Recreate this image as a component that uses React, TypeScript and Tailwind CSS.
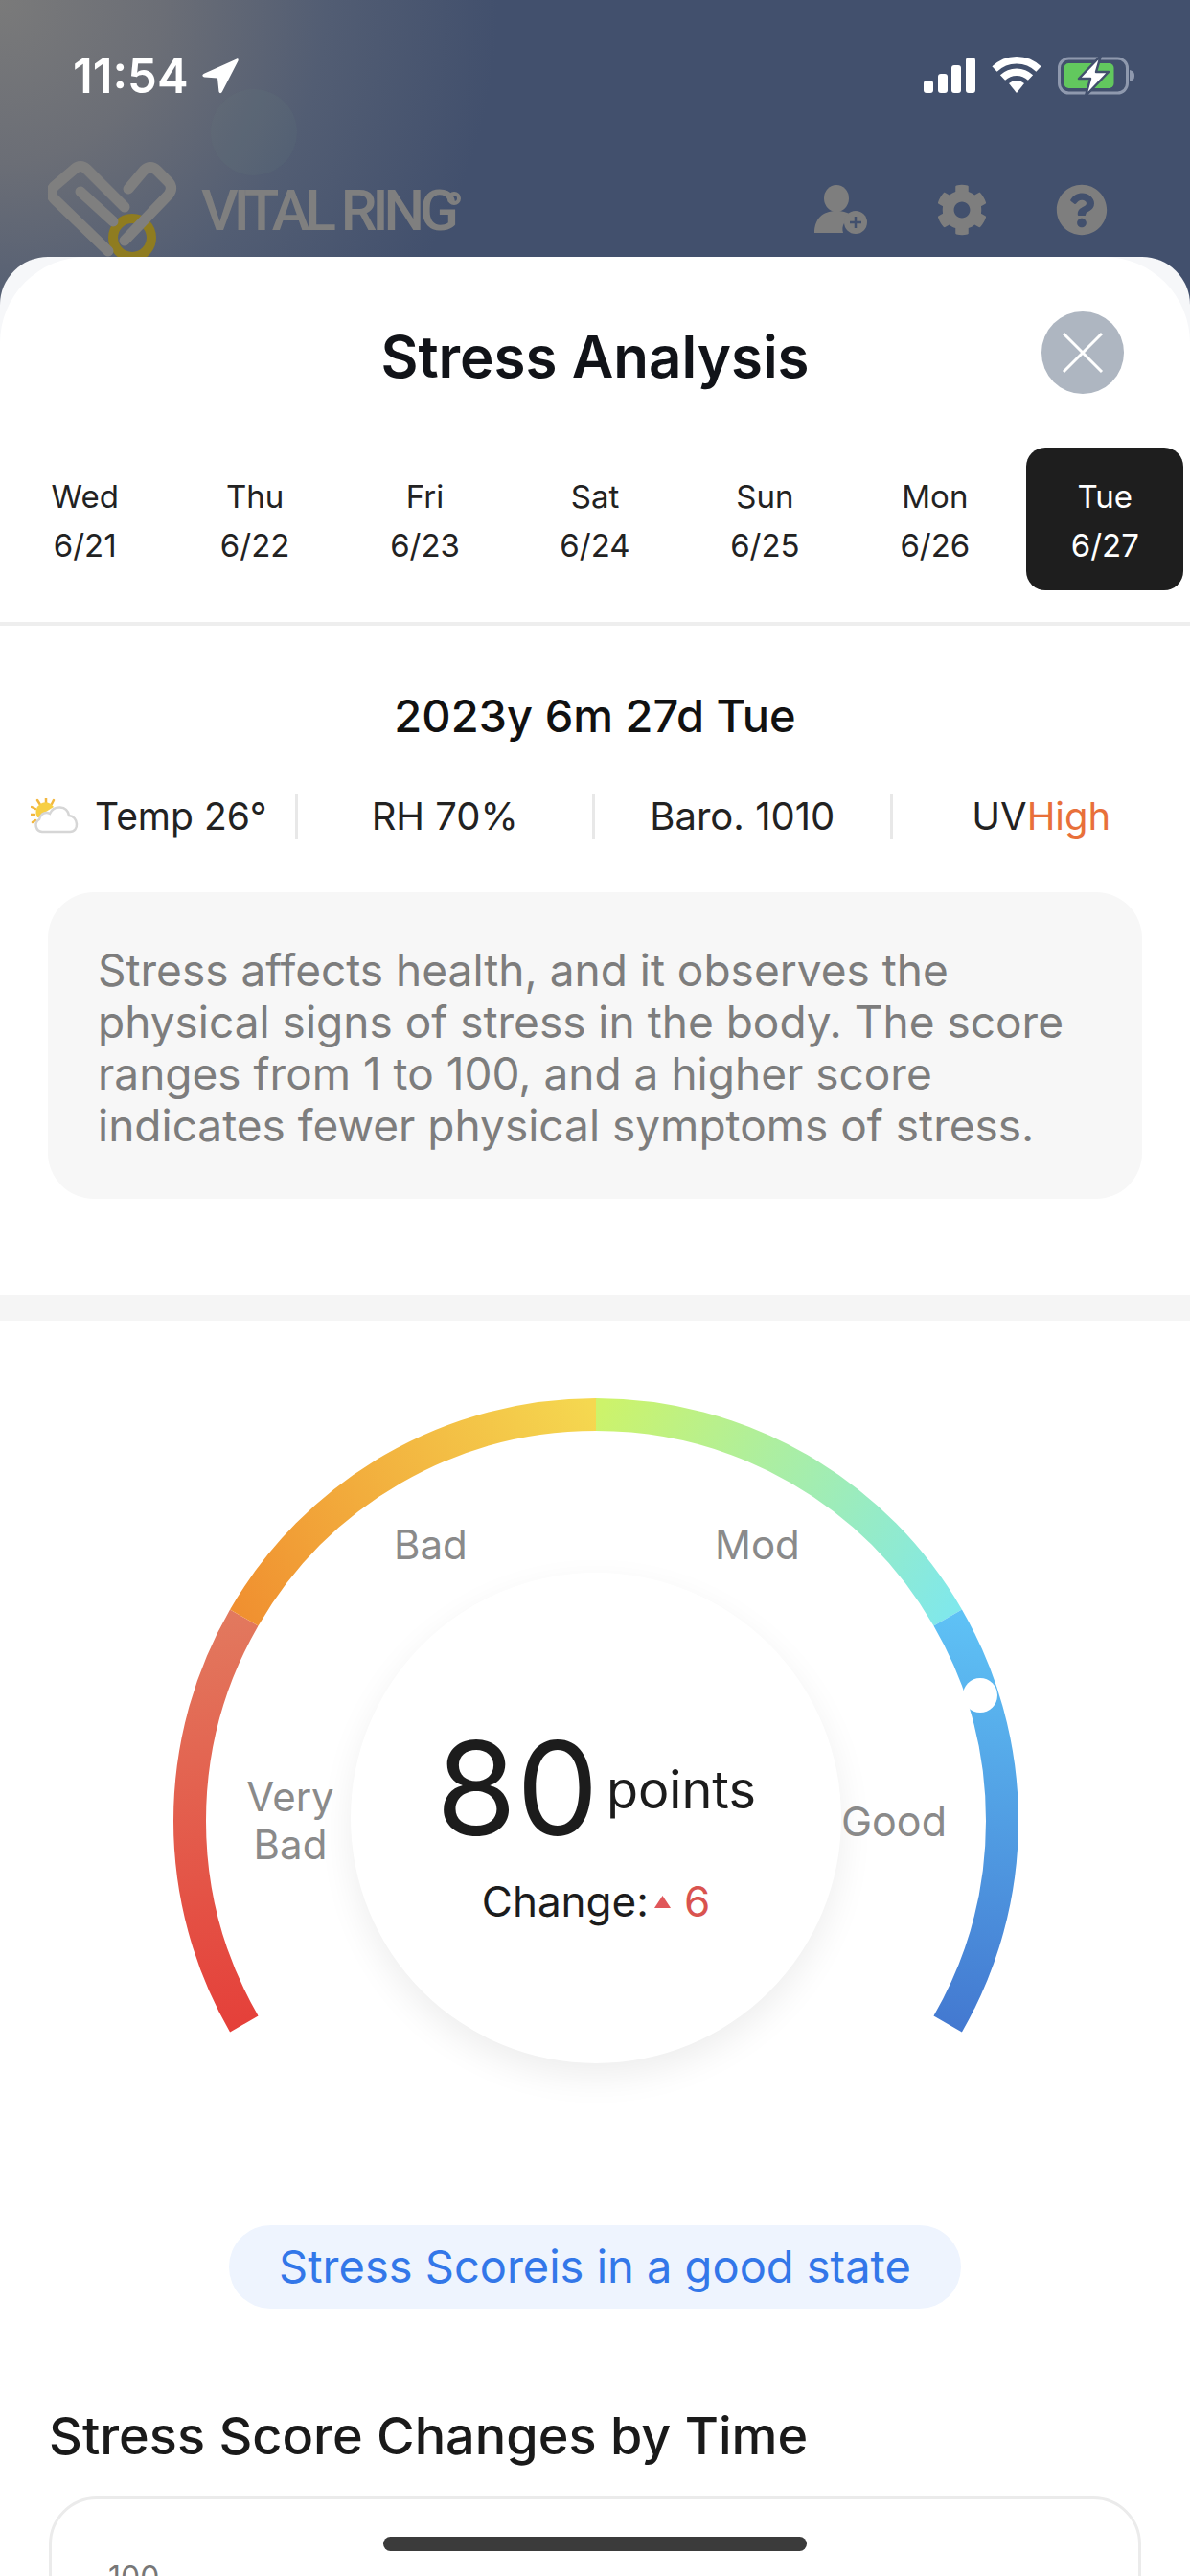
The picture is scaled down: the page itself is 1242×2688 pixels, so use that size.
import React from "react";
import { FaCog, FaQuestionCircle } from "react-icons/fa";

const font = { fontFamily: "Inter, 'Liberation Sans', sans-serif" };

const days = [
  ["Wed", "6/21"],
  ["Thu", "6/22"],
  ["Fri", "6/23"],
  ["Sat", "6/24"],
  ["Sun", "6/25"],
  ["Mon", "6/26"],
  ["Tue", "6/27"],
];

function StatusBar() {
  return (
    <div className="flex justify-between items-start pl-[76px] pr-[56px] pt-[56px] h-[110px]">
      <div className="flex items-center gap-[14px] text-white text-[49px] leading-[48px] font-semibold">
        <span>11:54</span>
        <svg width="38" height="38" viewBox="0 0 38 38" className="mt-[-2px]">
          <path d="M36 1.5 C37.5 1 38 2 37.5 3.5 L21 35.5 C19.8 38 17.6 37.5 17.4 35 L16 21.5 L2.5 20.5 C0 20.2 -0.5 18 2 16.8 Z" fill="#fff" />
        </svg>
      </div>
      <div className="flex items-start gap-[17px] pt-[2px]">
        <div className="flex items-end gap-[4.6px] h-[37px] mt-[2px]">
          <div className="w-[10px] h-[13px] bg-white rounded-[3px]" />
          <div className="w-[10px] h-[20px] bg-white rounded-[3px]" />
          <div className="w-[10px] h-[29px] bg-white rounded-[3px]" />
          <div className="w-[10px] h-[37px] bg-white rounded-[3px]" />
        </div>
        <svg width="52" height="40" viewBox="0 0 52 40" fill="none">
          <path d="M3 14 A33 33 0 0 1 49 14" stroke="#fff" strokeWidth="7.5" />
          <path d="M11.5 23 A21 21 0 0 1 40.500 23" stroke="#fff" strokeWidth="7.5" />
          <path d="M18 29 A12 12 0 0 1 34 29 L26 39 Z" fill="#fff" />
        </svg>
        <svg width="82" height="42" viewBox="0 0 82 42" fill="none">
          <rect x="1.500" y="3" width="71" height="36" rx="10" stroke="#8F99AE" strokeWidth="3" />
          <rect x="6.500" y="8" width="52" height="26" rx="5" fill="#62C85E" />
          <path d="M75 15 C79 16 80 18 80 21 C80 24 79 26 75 27 Z" fill="#8F99AE" />
          <path d="M45 0 L22 24 L34 24 L29 42 L53 17 L40 17 Z" fill="#fff" stroke="#42506D" strokeWidth="2.500" strokeLinejoin="round" />
        </svg>
      </div>
    </div>
  );
}

function Logo() {
  return (
    <div className="flex items-start">
      <svg width="150" height="110" viewBox="0 0 150 110" fill="none" className="shrink-0">
        <g transform="translate(-50 -166)">
          <circle cx="138" cy="248" r="20" stroke="#8F7C20" strokeWidth="10" />
          <path d="M130 216 L91 177 Q84 170 77 177 L57 194 Q50 201 57 208 L113 262" stroke="#7F7F7F" strokeWidth="11" strokeLinecap="round" />
          <path d="M84 200 L118 231" stroke="#7F7F7F" strokeWidth="11" strokeLinecap="round" />
          <path d="M134 197 L150 178 Q157 171 164 178 L176 190 Q181 196 176 203 L130 251" stroke="#7F7F7F" strokeWidth="11" strokeLinecap="round" />
        </g>
      </svg>
      <div className="relative ml-[10px] mt-[24px] text-[60px] leading-[60px] tracking-[-5px] font-medium text-[#7F7F7F] whitespace-nowrap" style={{ fontFamily: "Roboto, sans-serif" }}>
        VITAL RING
        <span className="absolute right-[-7px] top-[10px] w-[14px] h-[14px] rounded-full border-[4px] border-[#7F7F7F]" />
      </div>
    </div>
  );
}

function HeaderIcons() {
  return (
    <div className="flex items-center text-[#7E7E7E]">
      <svg width="56" height="52" viewBox="0 0 56 52" className="mr-[71px]">
        <ellipse cx="23" cy="14" rx="13" ry="14" fill="#7E7E7E" />
        <path d="M0 50 C0 36 8 27 23 27 C31 27 37 29 40 34 C31 36 28 43 30 50 Z" fill="#7E7E7E" />
        <circle cx="43" cy="39" r="12" fill="#7E7E7E" />
        <path d="M43 33 V45 M37 39 H49" stroke="#42506D" strokeWidth="2.500" />
      </svg>
      <FaCog size={54} className="mr-[71px]" />
      <FaQuestionCircle size={54} />
    </div>
  );
}

function Gauge() {
  return (
    <div className="relative h-[860px]">
      <svg width="1242" height="860" viewBox="0 0 1242 860" fill="none" className="block">
        <defs>
          <linearGradient id="red" gradientUnits="userSpaceOnUse" x1="200" y1="300" x2="260" y2="740">
            <stop offset="0" stopColor="#E27A5F" />
            <stop offset="1" stopColor="#E53F39" />
          </linearGradient>
          <linearGradient id="orange" gradientUnits="userSpaceOnUse" x1="253" y1="308" x2="621" y2="96">
            <stop offset="0" stopColor="#F09030" />
            <stop offset="1" stopColor="#F5D850" />
          </linearGradient>
          <linearGradient id="green" gradientUnits="userSpaceOnUse" x1="621" y1="96" x2="988" y2="308">
            <stop offset="0" stopColor="#CDF36A" />
            <stop offset="1" stopColor="#80E8EB" />
          </linearGradient>
          <linearGradient id="blue" gradientUnits="userSpaceOnUse" x1="1040" y1="300" x2="990" y2="740">
            <stop offset="0" stopColor="#5FC3F6" />
            <stop offset="1" stopColor="#4378D0" />
          </linearGradient>
        </defs>
        <g transform="translate(1 2)">
          <path d="M253.800 732 A424 424 0 0 1 253.800 308" stroke="url(#red)" strokeWidth="34" />
          <path d="M253.800 308 A424 424 0 0 1 621 96" stroke="url(#orange)" strokeWidth="34" />
          <path d="M621 96 A424 424 0 0 1 988.200 308" stroke="url(#green)" strokeWidth="34" />
          <path d="M988.200 308 A424 424 0 0 1 988.200 732" stroke="url(#blue)" strokeWidth="34" />
        </g>
        <circle cx="1023" cy="391" r="18" fill="#fff" />
      </svg>

      <div className="absolute left-[366px] top-[263px] w-[512px] h-[512px] rounded-full bg-white shadow-[0_14px_36px_rgba(0,0,0,0.07)] flex flex-col items-center">
        <div className="flex items-end gap-[8px] mt-[155px] h-[140px]">
          <span className="text-[136px] leading-[140px] text-[#1c1c1c]">80</span>
          <span className="text-[54px] leading-[60px] mb-[38px] text-[#1c1c1c]">points</span>
        </div>
        <div className="flex items-center mt-[20px] text-[44px] leading-[56px] text-[#1c1c1c]">
          <span>Change:</span>
          <svg width="17" height="13" viewBox="0 0 17 13" className="ml-[6px] mr-[14px]">
            <path d="M8.500 0 L17 13 H0 Z" fill="#E0575A" />
          </svg>
          <span className="text-[#D9534F]">6</span>
        </div>
      </div>

      <span className="absolute left-[411px] top-[208px] text-[42px] leading-[52px] text-[#8A8A8A]">Bad</span>
      <span className="absolute left-[746px] top-[208px] text-[42px] leading-[52px] text-[#8A8A8A]">Mod</span>
      <div className="absolute left-[253px] top-[472px] w-[100px] text-center text-[42px] leading-[50px] text-[#8A8A8A]">
        Very
        <br />
        Bad
      </div>
      <span className="absolute left-[878px] top-[496px] text-[43px] leading-[52px] text-[#8A8A8A]">Good</span>
    </div>
  );
}

export default function App() {
  return (
    <div
      className="relative w-[1242px] h-[2688px] overflow-hidden bg-[radial-gradient(circle_at_0px_0px,#7A7A7A_0px,#6B6E76_170px,#525D73_340px,#42506D_520px)]"
      style={font}
    >
      <div className="h-[268px] overflow-hidden relative">
        <div className="absolute left-[220px] top-[93px] w-[90px] h-[90px] rounded-full bg-[#6F8A7F]/10" />
        <div className="relative">
          <StatusBar />
          <div className="flex justify-between items-start pl-[50px] pr-[86px] pt-[56px]">
            <Logo />
            <div className="mt-[26px]"><HeaderIcons /></div>
          </div>
        </div>
      </div>

      <div className="h-[2420px] rounded-t-[50px] bg-[#F6F7F9]">
        <div className="relative h-full rounded-t-[90px] bg-white">
          <div className="pt-[44px] pb-[35px] text-center text-[60px] leading-[120px] font-semibold text-[#111318]">
            Stress Analysis
          </div>
          <button className="absolute right-[69px] top-[57px] w-[86px] h-[86px] rounded-full bg-[#AEB6C1] flex items-center justify-center">
            <svg width="46" height="46" viewBox="0 0 46 46" fill="none">
              <path d="M3 3 L43 43 M43 3 L3 43" stroke="#fff" strokeWidth="3" />
            </svg>
          </button>

          <div className="grid grid-cols-7 h-[149px]">
            {days.map(([d, n], i) => {
              const on = i === 6;
              return (
                <div
                  key={n}
                  className={
                    on
                      ? "mx-auto w-[164px] h-full rounded-[20px] bg-[#1E1E1E] text-white flex flex-col items-center justify-center pt-[5px] text-[33px] leading-[51px]"
                      : "h-full text-[#222] flex flex-col items-center justify-center pt-[5px] text-[33px] leading-[51px]"
                  }
                >
                  <span>{d}</span>
                  <span>{n}</span>
                </div>
              );
            })}
          </div>
          <div className="mt-[33px] h-[4px] bg-[#EEEEEE]" />

          <div className="mt-[64px] text-center text-[47px] leading-[60px] font-medium text-[#111]">
            2023y 6m 27d Tue
          </div>

          <div className="mt-[52px] grid grid-cols-4 h-[46px] text-[40px] leading-[46px] text-[#222]">
            <div className="relative flex items-center border-r-[3px] border-[#E8E8E8] pl-[32px]">
              <svg width="50" height="38" viewBox="0 0 50 38" fill="none" className="mr-[17px]">
                <g stroke="#F2B740" strokeWidth="2.500" strokeLinecap="round">
                  <path d="M16 0 V5 M7 2 L9.500 6 M24 2 L22 6 M1 9 L5 11 M0 17 H4 M2 25 L5 23" />
                </g>
                <path d="M7 20 A10 10 0 0 1 24 9 L16 14 L9 20 Z" fill="#F7CF45" />
                <path d="M12 35 A7 7 0 0 1 9 22 C11 15 16 14 20 16 C24 7 38 7 40 18 C50 19 51 35 41 35 Z" fill="#fff" stroke="#D6D6D6" strokeWidth="2.500" />
              </svg>
              <span className="text-[39px]">Temp 26°</span>
            </div>
            <div className="flex items-center justify-center border-r-[3px] border-[#E8E8E8]">RH 70%</div>
            <div className="flex items-center justify-center border-r-[3px] border-[#E8E8E8]">Baro. 1010</div>
            <div className="flex items-center justify-center">
              UV<span className="text-[#E8703A]">High</span>
            </div>
          </div>

          <div className="mx-[50px] mt-[56px] h-[320px] rounded-[48px] bg-[#F7F7F7] pl-[52px] pr-[60px] pt-[54px] text-[46px] leading-[54px] text-[#7D7D7D]">
            Stress affects health, and it observes the physical signs of stress in the body. The score ranges from 1 to 100, and a higher score indicates fewer physical symptoms of stress.
          </div>

          <div className="mt-[100px] h-[27px] bg-[#F5F5F5]" />

          <Gauge />

          <div className="mt-[84px] mx-auto w-[764px] h-[87px] rounded-full bg-[#EEF4FE] flex items-center justify-center text-[47px] text-[#3377E9]">
            Stress Scoreis in a good state
          </div>

          <div className="mt-[98px] pl-[51px] text-[54px] leading-[70px] font-medium text-[#1A1A1A]">
            Stress Score Changes by Time
          </div>

          <div className="mx-[51px] mt-[28px] h-[200px] rounded-t-[50px] border-[3px] border-[#EBEBEB] pl-[59px] pt-[62px] text-[32px] leading-[40px] text-[#777]">
            100
          </div>
        </div>
      </div>

      <div className="absolute left-[400px] top-[2647px] w-[442px] h-[15px] rounded-full bg-[#3B3B3B]" />
    </div>
  );
}
